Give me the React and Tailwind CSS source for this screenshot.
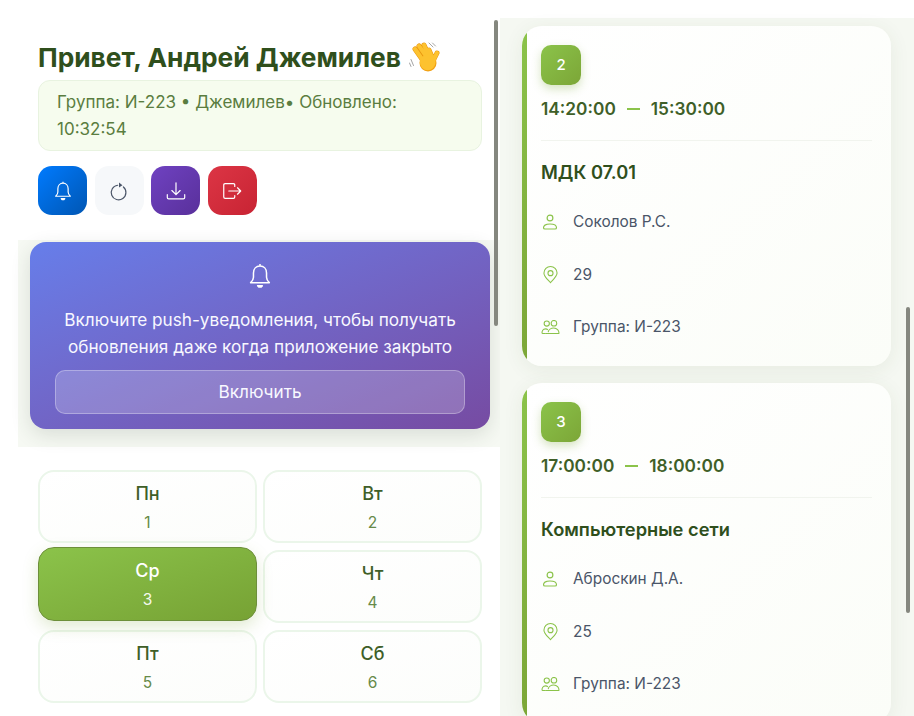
import React from 'react';

function BellIcon({ className }) {
  return (
    <svg viewBox="0 0 24 24" fill="none" stroke="currentColor" strokeWidth="1.300" strokeLinejoin="round" className={className}>
      <path d="M12 1.800v1.700M12 3.500c-3.400 0-5.600 2.600-5.600 6v3.600c0 2-1 3.300-2.400 4.600h16c-1.400-1.300-2.400-2.600-2.400-4.600V9.500c0-3.400-2.200-6-5.600-6Z" />
      <path d="M10 20.300h4l-1 1.200h-2Z" fill="currentColor" />
    </svg>
  );
}

function RefreshIcon({ className }) {
  return (
    <svg viewBox="0 0 24 24" fill="none" stroke="currentColor" strokeWidth="1.300" strokeLinecap="round" className={className}>
      <path d="M16.800 7.600A8 8 0 1 1 10.500 5.700" />
      <path d="M12 2.800 15.800 5.600 12 8.200Z" fill="currentColor" stroke="none" />
    </svg>
  );
}

function DownloadIcon({ className }) {
  return (
    <svg viewBox="0 0 24 24" fill="none" stroke="currentColor" strokeWidth="1.300" strokeLinecap="round" strokeLinejoin="round" className={className}>
      <path d="M12 3v13M7.500 11.500 12 16l4.500-4.500" />
      <path d="M2.500 16v3c0 1 .6 1.500 1.500 1.500h16c.9 0 1.500-.5 1.500-1.500v-3" />
    </svg>
  );
}

function LogoutIcon({ className }) {
  return (
    <svg viewBox="0 0 24 24" fill="none" stroke="currentColor" strokeWidth="1.300" strokeLinecap="round" strokeLinejoin="round" className={className}>
      <path d="M15 7V5.500C15 4.500 14.500 4 13.500 4H4.500C3.500 4 3 4.500 3 5.500v13c0 1 .5 1.500 1.500 1.500h9c1 0 1.500-.5 1.500-1.500V17" />
      <path d="M8.500 12h13M18 8.500l3.500 3.500-3.500 3.500" />
    </svg>
  );
}

function UserIcon({ className }) {
  return (
    <svg viewBox="0 0 16 16" fill="none" stroke="currentColor" strokeWidth="1.150" className={className}>
      <circle cx="8" cy="4" r="2.900" />
      <path d="M3 15h10c.8 0 1.500-.5 1.500-1.300 0-2.100-2.700-3.700-6.500-3.700s-6.500 1.600-6.500 3.700c0 .8.700 1.300 1.500 1.300Z" />
    </svg>
  );
}

function PinIcon({ className }) {
  return (
    <svg viewBox="0 0 16 18" fill="none" stroke="currentColor" strokeWidth="1.150" strokeLinejoin="round" className={className}>
      <path d="M8 17.300c-1-1.600-7-6.300-7-10.300a7 7 0 0 1 14 0c0 4-6 8.700-7 10.300Z" />
      <circle cx="8" cy="7" r="2.700" />
    </svg>
  );
}

function GroupIcon({ className }) {
  return (
    <svg viewBox="0 0 20 15" fill="none" stroke="currentColor" strokeWidth="1.150" strokeLinejoin="round" className={className}>
      <circle cx="6" cy="3.800" r="2.800" />
      <circle cx="13.700" cy="3.500" r="3" />
      <path d="M5 14.500h14c.4-3.200-2.200-6-5.500-6-3 0-5.600 2-6 4.500" />
      <path d="M1 14.500c-.4-2.800 1-5 3.700-5 1 0 1.800.3 2.500 1M1 14.500h4" />
    </svg>
  );
}

// 👋 drawn by hand, no colour emoji font in the sandbox
function WaveIcon() {
  return (
    <svg viewBox="0 0 32 32" className="w-8 h-8 shrink-0" fill="none" strokeLinecap="round">
      <path d="M2 17.500l2.500 6M.500 21l1.500 3.500M20 1l4 4M23.500 1l3 3" stroke="#8d8d8d" strokeWidth=".8" />
      <g stroke="#e8950f" strokeWidth="5">
        <path d="M6 7l7 10M10 4l7 10M15 3l5 11M20 8l3 7M28 11l-4 8" />
      </g>
      <circle cx="19" cy="21" r="8.500" fill="#f1a013" />
      <g stroke="#fdc22f" strokeWidth="4">
        <path d="M6 7l7 10M10 4l7 10M15 3l5 11M20 8l3 7M28 11l-4 8" />
      </g>
      <circle cx="18.700" cy="20.500" r="7.800" fill="#fdc22f" />
    </svg>
  );
}

const days = [
  { name: 'Пн', num: 1 },
  { name: 'Вт', num: 2 },
  { name: 'Ср', num: 3, active: true },
  { name: 'Чт', num: 4 },
  { name: 'Пт', num: 5 },
  { name: 'Сб', num: 6 },
];

const lessons = [
  { num: 2, start: '14:20:00', end: '15:30:00', title: 'МДК 07.01', teacher: 'Соколов Р.С.', room: '29' },
  { num: 3, start: '17:00:00', end: '18:00:00', title: 'Компьютерные сети', teacher: 'Аброскин Д.А.', room: '25' },
];

function Lesson({ lesson }) {
  return (
    <div className="relative overflow-hidden shrink-0 h-[340px] rounded-[20px] bg-gradient-to-br from-white to-[#fbfdf8] shadow-[0_4px_20px_rgba(60,90,40,0.08)] pl-[19px] pr-[19px] pt-[19px]">
      <div className="absolute left-0 top-0 bottom-0 w-[5px] bg-gradient-to-b from-[#8bc34a] to-[#7ca637]" />
      <div className="w-10 h-10 rounded-[10px] bg-gradient-to-br from-[#8bc34a] to-[#7ca637] shadow-[0_4px_10px_rgba(124,166,55,0.3)] flex items-center justify-center text-white text-[15px] font-medium">
        {lesson.num}
      </div>
      <div className="mt-[13px] h-[22px] flex items-center text-[17.300px] font-semibold text-[#3f5f28] leading-none">
        <span>{lesson.start}</span>
        <span className="w-[13px] h-[2px] bg-[#8bc34a] mx-[11px]" />
        <span>{lesson.end}</span>
      </div>
      <div className="mt-[20px] border-t border-[#f1f4ee]" />
      <div className="mt-[20px] h-[24px] flex items-center text-[18.300px] font-semibold text-[#2f4f1c]">
        {lesson.title}
      </div>
      <div className="mt-[27px] flex flex-col gap-[32.500px] text-[15.400px] text-[#4a5568]">
        <div className="h-5 flex items-center">
          <div className="w-[18px] flex justify-center"><UserIcon className="w-[16px] h-[16px] shrink-0 text-[#8bc34a]" /></div>
          <span className="ml-[14px]">{lesson.teacher}</span>
        </div>
        <div className="h-5 flex items-center">
          <div className="w-[18px] flex justify-center"><PinIcon className="w-[15px] h-[18px] shrink-0 text-[#8bc34a]" /></div>
          <span className="ml-[14px]">{lesson.room}</span>
        </div>
        <div className="h-5 flex items-center">
          <div className="w-[18px] flex justify-center"><GroupIcon className="w-[19px] h-[14px] shrink-0 text-[#8bc34a]" /></div>
          <span className="ml-[14px]">Группа: И-223</span>
        </div>
      </div>
    </div>
  );
}

export default function App() {
  return (
    <div className="relative w-[914px] h-[716px] overflow-hidden bg-white flex font-['Inter','Noto_Sans',sans-serif]">
      {/* left column */}
      <div className="w-[500px] shrink-0 flex flex-col">
        <div className="h-[240px] pl-[38px] pr-[18px] pt-[39px]">
          <div className="flex items-center h-[38px] gap-[8px]">
            <h1 className="text-[26.300px] font-bold text-[#2f4f1c] leading-none whitespace-nowrap">Привет, Андрей Джемилев</h1>
            <WaveIcon />
          </div>
          <div className="mt-[3px] h-[71px] rounded-[12px] border border-[#e8f3e0] bg-[#f6fcee] px-[18px] py-[8px] text-[17px] leading-[27px] text-[#5a7d40]">
            Группа: И-223 • Джемилев• Обновлено: 10:32:54
          </div>
          <div className="mt-[15px] flex gap-[7.600px]">
            <button type="button" className="w-[49px] h-[49px] rounded-[14px] bg-gradient-to-br from-[#007bff] to-[#0056b3] text-white flex items-center justify-center">
              <BellIcon className="w-[22px] h-[22px]" />
            </button>
            <button type="button" className="w-[49px] h-[49px] rounded-[14px] bg-[#f6f8fa] text-[#4a5568] flex items-center justify-center">
              <RefreshIcon className="w-[22px] h-[22px]" />
            </button>
            <button type="button" className="w-[49px] h-[49px] rounded-[14px] bg-gradient-to-br from-[#6f42c1] to-[#59309b] text-white flex items-center justify-center">
              <DownloadIcon className="w-[22px] h-[22px]" />
            </button>
            <button type="button" className="w-[49px] h-[49px] rounded-[14px] bg-gradient-to-br from-[#dc3545] to-[#c82333] text-white flex items-center justify-center">
              <LogoutIcon className="w-[22px] h-[22px]" />
            </button>
          </div>
        </div>

        <div className="ml-[18px] h-[207px] bg-[#f6f9f3] pl-[12px] pr-[10px] pt-[2px]">
          <div className="h-[187px] rounded-[16px] bg-gradient-to-br from-[#667eea] to-[#764ba2] shadow-[0_6px_20px_rgba(40,60,40,0.14)] px-[25px] pt-[20px] flex flex-col items-center text-white">
            <BellIcon className="w-[28px] h-[28px]" />
            <p className="mt-[16px] text-center text-[17.200px] leading-[27px] text-[#f8f8ff] whitespace-nowrap">
              Включите push-уведомления, чтобы получать<br />обновления даже когда приложение закрыто
            </p>
            <button type="button" className="mt-[10px] w-full h-[44px] rounded-[10px] border border-white/30 bg-white/20 text-[17.200px] text-[#f8f8ff]">
              Включить
            </button>
          </div>
        </div>

        <div className="grid grid-cols-2 gap-x-[6px] gap-y-[7px] pl-[38px] pr-[18px] pt-[23px]">
          {days.map((day) => (
            <div
              key={day.num}
              className={
                day.active
                  ? 'h-[74px] -mb-px -translate-y-[3px] rounded-[16px] border border-[#6d8f3a] bg-gradient-to-br from-[#8bc34a] to-[#77a234] shadow-[0_6px_16px_rgba(124,166,55,0.22)] text-white flex flex-col items-center pt-[12px]'
                  : 'h-[73px] rounded-[16px] border-2 border-[#ebf6ea] bg-gradient-to-br from-white to-[#fcfdfb] flex flex-col items-center pt-[11px]'
              }
            >
              <span className={day.active ? 'text-[18px] font-medium leading-[22px]' : 'text-[18px] font-medium leading-[22px] text-[#3f5f28]'}>{day.name}</span>
              <span className={day.active ? 'mt-[8px] text-[15.500px] leading-[20px] text-[#f4f9ec]' : 'mt-[8px] text-[15.500px] leading-[20px] text-[#668a48]'}>{day.num}</span>
            </div>
          ))}
        </div>
      </div>

      {/* lessons */}
      <div className="flex-1 mt-[18px] bg-[#f5f8f2] pl-[22px] pr-[23px] pt-[8px] flex flex-col gap-[17px]">
        {lessons.map((lesson) => (
          <Lesson key={lesson.num} lesson={lesson} />
        ))}
      </div>

      {/* overlay scrollbars */}
      <div className="absolute left-[494px] top-[20px] w-[4px] h-[306px] rounded-full bg-[#85877f]" />
      <div className="absolute left-[906px] top-[307px] w-[4px] h-[306px] rounded-full bg-[#85877f]" />
    </div>
  );
}
